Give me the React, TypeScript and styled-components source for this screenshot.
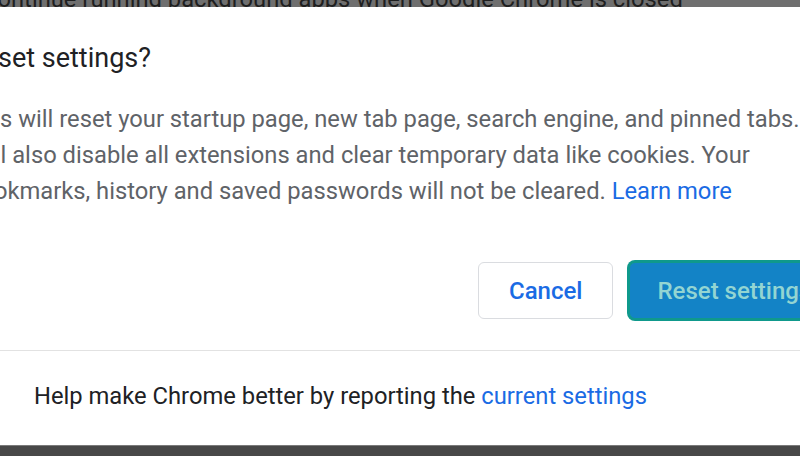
import React from "react";
import styled, { createGlobalStyle } from "styled-components";

const GlobalStyle = createGlobalStyle`
  html, body {
    margin: 0;
    padding: 0;
    background: #ffffff;
    overflow: hidden;
  }
  body {
    font-family: Roboto, "Liberation Sans", Arial, sans-serif;
  }
`;

const Page = styled.div`
  width: 800px;
  height: 456px;
  display: flex;
  flex-direction: column;
  overflow: hidden;
`;

const Backdrop = styled.div`
  height: 7px;
  flex: none;
  background: #6f6f6f;
  overflow: hidden;
  white-space: nowrap;
`;

const BackdropText = styled.div`
  margin-top: -15px;
  margin-left: -18px;
  font-size: 23.75px;
  line-height: 28px;
  color: #1f1f1f;
`;

const Dialog = styled.div`
  flex: 1;
  display: flex;
  flex-direction: column;
  width: 900px;
  margin-left: -33px;
  background: #ffffff;
`;

const Title = styled.h2`
  margin: 35px 0 0;
  font-size: 27px;
  line-height: 32px;
  font-weight: 400;
  color: #202124;
`;

const Body = styled.p`
  margin: 27px 0 0;
  font-size: 23.75px;
  line-height: 36px;
  color: #5f6368;
  white-space: nowrap;
`;

// the wrapped lines of the message, with a small nudge where the original wrap sat
const Line = styled.span<{ $shift?: number }>`
  display: block;
  margin-left: ${(p) => p.$shift ?? 0}px;
`;

const Link = styled.a`
  color: #1a6be4;
  text-decoration: none;
`;

const ButtonRow = styled.div`
  display: flex;
  gap: 16px;
  margin-top: 53px;
  padding-left: 511px;
  align-items: center;
`;

const Button = styled.button<{ $primary?: boolean }>`
  height: 57px;
  padding: 0 ${(p) => (p.$primary ? "27px" : "30px")};
  border-radius: 6px;
  font-family: Roboto, "Liberation Sans", Arial, sans-serif;
  font-size: 24px;
  font-weight: 500;
  white-space: nowrap;
  cursor: pointer;
  border: 1px solid ${(p) => (p.$primary ? "#0f998c" : "#dadce0")};
  background: ${(p) => (p.$primary ? "#1383c6" : "#ffffff")};
  color: ${(p) => (p.$primary ? "#93d5d2" : "#1a6be4")};
  box-shadow: ${(p) => (p.$primary ? "0 0 0 2px #0f998c" : "none")};
`;

const Divider = styled.div`
  margin-top: 31px;
  height: 1px;
  background: #e2e2e2;
`;

const Footer = styled.div`
  flex: 1;
  padding: 27px 0 0 67px;
  font-size: 23.75px;
  line-height: 36px;
  color: #202124;
  white-space: nowrap;
`;

const BottomBar = styled.div`
  height: 10px;
  flex: none;
  background: #484848;
  border-top: 1px solid #7a7a7a;
`;

export default function App() {
  return (
    <Page>
      <GlobalStyle />
      <Backdrop>
        <BackdropText>Continue running background apps when Google Chrome is closed</BackdropText>
      </Backdrop>
      <Dialog>
        <Title>Reset settings?</Title>
        <Body>
          <Line>This will reset your startup page, new tab page, search engine, and pinned tabs.</Line>
          <Line $shift={-16}>
            It will also disable all extensions and clear temporary data like cookies. Your
          </Line>
          <Line>
            bookmarks, history and saved passwords will not be cleared. <Link href="#">Learn more</Link>
          </Line>
        </Body>
        <ButtonRow>
          <Button>Cancel</Button>
          <Button $primary>Reset settings</Button>
        </ButtonRow>
        <Divider />
        <Footer>
          Help make Chrome better by reporting the <Link href="#">current settings</Link>
        </Footer>
      </Dialog>
      <BottomBar />
    </Page>
  );
}
